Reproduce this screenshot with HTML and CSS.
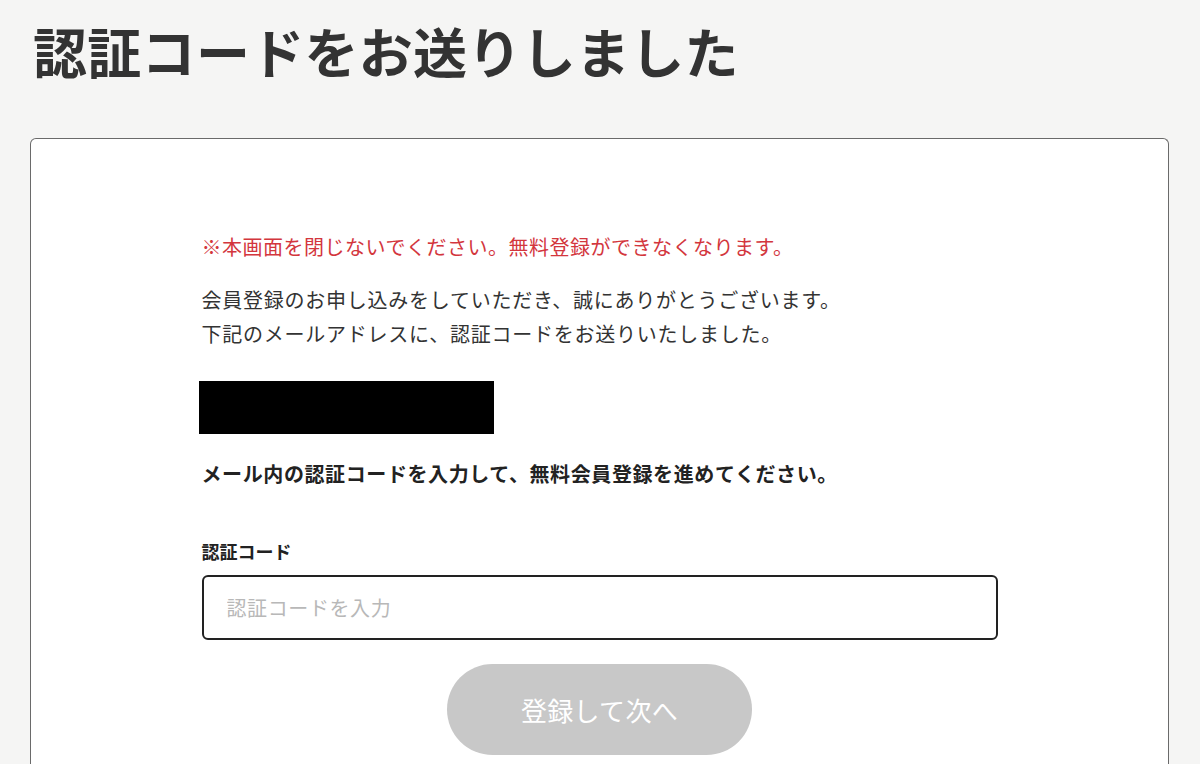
FILE: index.html
```html
<!DOCTYPE html>
<html lang="ja">
<head>
<meta charset="utf-8">
<title>認証コードをお送りしました</title>
<link rel="stylesheet" href="styles.css">
</head>
<body>
<header class="page-head">
  <h1 class="page-title">認証コードをお送りしました</h1>
</header>
<main class="card">
  <div class="content">
    <p class="warning">※本画面を閉じないでください。無料登録ができなくなります。</p>
    <p class="intro">会員登録のお申し込みをしていただき、誠にありがとうございます。<br>下記のメールアドレスに、認証コードをお送りいたしました。</p>
    <div class="redacted"></div>
    <p class="instruction">メール内の認証コードを入力して、無料会員登録を進めてください。</p>
    <form class="code-form">
      <label class="field-label" for="code">認証コード</label>
      <input class="field-input" id="code" type="text" placeholder="認証コードを入力">
      <div class="actions">
        <button class="submit" type="button" disabled>登録して次へ</button>
      </div>
    </form>
  </div>
</main>
</body>
</html>
```
FILE: styles.css
```css
* { box-sizing: border-box; }
html, body {
  margin: 0;
  padding: 0;
}
body {
  background: #f5f5f4;
  font-family: "Noto Sans CJK JP", "Noto Sans", sans-serif;
  color: #333;
  overflow: hidden;
}
.page-head {
  padding: 14px 0 0 33px;
  height: 138px;
}
.page-title {
  margin: 0;
  font-size: 54px;
  line-height: 74px;
  font-weight: 700;
  color: #333;
  letter-spacing: 0.3px;
}
.card {
  margin-left: 30px;
  width: 1139px;
  height: 640px;
  background: #fff;
  border: 1px solid #6a6a6a;
  border-bottom: none;
  border-radius: 6px 6px 0 0;
  padding-top: 91px;
}
.content {
  width: 796px;
  margin: 0 auto;
}
.warning {
  margin: 0;
  font-size: 20px;
  line-height: 34px;
  color: #d3363d;
  letter-spacing: 0.5px;
}
.intro {
  margin: 19px 0 0;
  font-size: 20px;
  line-height: 34px;
  color: #333;
  letter-spacing: 0.75px;
}
.redacted {
  margin: 30px 0 0 -3px;
  width: 295px;
  height: 53px;
  background: #000;
}
.instruction {
  margin: 23px 0 0;
  font-size: 20px;
  line-height: 34px;
  font-weight: 700;
  color: #222;
  letter-spacing: 0.6px;
}
.code-form {
  margin-top: 47px;
  display: flex;
  flex-direction: column;
}
.field-label {
  font-size: 18px;
  line-height: 26px;
  font-weight: 700;
  color: #222;
}
.field-input {
  margin-top: 11px;
  height: 65px;
  width: 100%;
  border: 2px solid #222;
  border-radius: 6px;
  padding: 0 23px;
  font-family: "Noto Sans CJK JP", "Noto Sans", sans-serif;
  font-size: 20px;
  letter-spacing: 0.6px;
  color: #333;
  background: #fff;
  outline: none;
}
.field-input::placeholder {
  color: #b8b8b8;
}
.actions {
  margin-top: 24px;
  display: flex;
  justify-content: center;
}
.submit {
  width: 305px;
  height: 91px;
  border: none;
  border-radius: 46px;
  background: #c8c8c8;
  color: #fff;
  font-family: "Noto Sans CJK JP", "Noto Sans", sans-serif;
  font-size: 26px;
  letter-spacing: 0.3px;
}
```
